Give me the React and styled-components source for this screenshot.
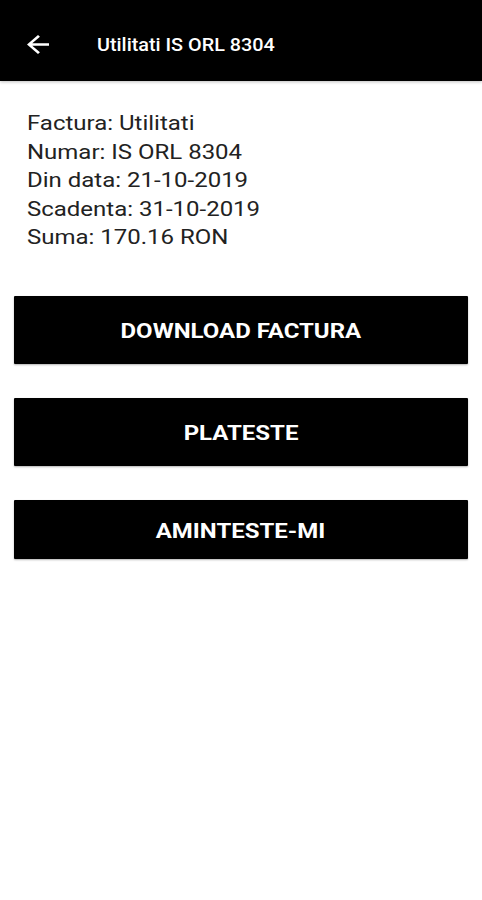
import React from 'react'
import styled, {createGlobalStyle} from 'styled-components'

const GlobalStyle = createGlobalStyle`
  html, body {
    margin: 0;
    padding: 0;
    background: #fff;
    font-family: Roboto, "Liberation Sans", sans-serif;
  }
`

const STRETCH = 1.17

const Page = styled.div`
  width: 482px;
  min-height: 900px;
  background: #fff;
  overflow: hidden;
`

const Toolbar = styled.header`
  height: 81px;
  background: #000;
  display: flex;
  align-items: center;
  padding: 8px 0 0 27px;
  box-sizing: border-box;
  box-shadow: 0 1px 3px rgba(0, 0, 0, 0.25);
`

const BackButton = styled.button`
  background: none;
  border: 0;
  padding: 0;
  width: 22px;
  height: 19px;
  display: flex;
`

const Title = styled.h1`
  margin: 0 0 0 48px;
  color: #fff;
  font-size: 18px;
  font-weight: 500;
  transform: scaleX(1.1);
  transform-origin: left center;
`

const Details = styled.div`
  padding: 28px 27px 0;
`

const DetailLines = styled.div`
  width: max-content;
  color: #222;
  font-size: 20.5px;
  line-height: 28.5px;
  transform: scaleX(${STRETCH});
  transform-origin: left top;
`

const Actions = styled.div`
  display: flex;
  flex-direction: column;
  gap: 34px;
  padding: 44px 14px 0 14px;
`

const ActionButton = styled.button`
  height: ${p => p.$h || 68}px;
  padding: 3px 0 0;
  background: #000;
  color: #fff;
  border: 0;
  border-radius: 1px;
  font-family: Roboto, "Liberation Sans", sans-serif;
  font-size: 20.5px;
  font-weight: 700;
  box-shadow: 0 1px 2px rgba(0, 0, 0, 0.3);
`

const Label = styled.span`
  display: inline-block;
  transform: scaleX(${STRETCH});
`

const BackArrow = () => (
  <svg width="22" height="19" viewBox="4 4 16 16" preserveAspectRatio="none">
    <path d="M20 11H7.83l5.59-5.59L12 4l-8 8 8 8 1.41-1.41L7.83 13H20v-2z" fill="#fff" />
  </svg>
)

export default function App() {
  return (
    <Page>
      <GlobalStyle />
      <Toolbar>
        <BackButton aria-label="back"><BackArrow /></BackButton>
        <Title>Utilitati IS ORL 8304</Title>
      </Toolbar>
      <Details>
        <DetailLines>
          <div>Factura: Utilitati</div>
          <div>Numar: IS ORL 8304</div>
          <div>Din data: 21-10-2019</div>
          <div>Scadenta: 31-10-2019</div>
          <div>Suma: 170.16 RON</div>
        </DetailLines>
      </Details>
      <Actions>
        <ActionButton><Label>DOWNLOAD FACTURA</Label></ActionButton>
        <ActionButton><Label>PLATESTE</Label></ActionButton>
        <ActionButton $h={59}><Label>AMINTESTE-MI</Label></ActionButton>
      </Actions>
    </Page>
  )
}
